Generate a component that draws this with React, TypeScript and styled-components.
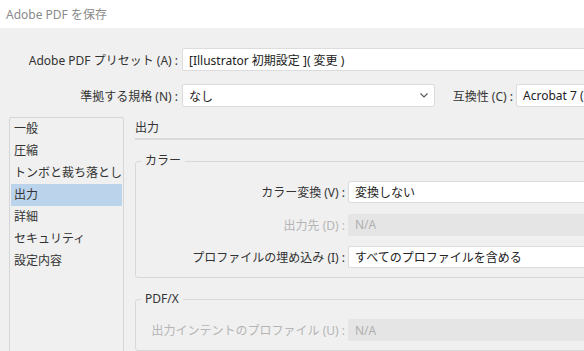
import styled, { createGlobalStyle } from 'styled-components'

const GlobalStyle = createGlobalStyle`
  html, body {
    margin: 0;
    padding: 0;
    overflow: hidden;
    background: #f0f0f0;
  }
  body {
    font-family: "Noto Sans", "Noto Sans CJK JP", sans-serif;
    font-size: 12px;
    color: #333;
  }
`

const Window = styled.div`
  width: 760px;
  height: 351px;
  background: #f0f0f0;
  overflow: hidden;
`

const TitleBar = styled.div`
  height: 28px;
  background: #fff;
  display: flex;
  align-items: center;
  padding-left: 6px;
  color: #8a8a8a;
  font-size: 12px;
`

const Header = styled.div`
  display: flex;
  flex-direction: column;
  gap: 13px;
  padding-top: 20px;
`

const HeaderRow = styled.div`
  display: flex;
  align-items: center;
  height: 23px;
`

const Label = styled.div<{ $width?: number; $disabled?: boolean }>`
  flex: none;
  ${(p) => (p.$width ? `width: ${p.$width}px;` : '')}
  text-align: right;
  white-space: nowrap;
  color: ${(p) => (p.$disabled ? '#b5b5b5' : '#333')};
`

const Field = styled.div<{ $width?: number; $disabled?: boolean }>`
  box-sizing: border-box;
  height: 100%;
  ${(p) => (p.$width ? `width: ${p.$width}px; flex: none;` : 'flex: 1;')}
  display: flex;
  align-items: center;
  justify-content: space-between;
  padding: 0 6px 0 6px;
  background: ${(p) => (p.$disabled ? '#e5e5e5' : '#fff')};
  border: 1px solid ${(p) => (p.$disabled ? '#e5e5e5' : '#dcdcdc')};
  border-radius: 2px;
  color: ${(p) => (p.$disabled ? '#b0b0b0' : '#222')};
  white-space: nowrap;
`

const Chevron = () => (
  <svg width="8" height="5" viewBox="0 0 8 5">
    <polyline points="0.5,0.5 4,4 7.5,0.5" fill="none" stroke="#555" strokeWidth="1.1" />
  </svg>
)

const Main = styled.div`
  display: flex;
  gap: 11px;
  padding-left: 9px;
  margin-top: 10px;
`

const Sidebar = styled.div`
  flex: none;
  box-sizing: border-box;
  width: 115px;
  height: 260px;
  border: 1px solid #d6d6d6;
  border-radius: 2px;
  padding: 0 1px;
`

const NavItem = styled.div<{ $active?: boolean }>`
  height: 22px;
  line-height: 22px;
  padding-left: 3px;
  white-space: nowrap;
  background: ${(p) => (p.$active ? '#bcd3ec' : 'transparent')};
  color: #333;
`

const Panel = styled.div`
  flex: 1;
  display: flex;
  flex-direction: column;
`

const PanelTitle = styled.div`
  height: 21px;
  line-height: 21px;
  border-bottom: 2px solid #dadada;
`

const Group = styled.fieldset`
  margin: 12px 0 0 0;
  padding: 0 0 9px 5px;
  border: 1px solid #d8d8d8;
  border-radius: 3px;
  display: flex;
  flex-direction: column;
  gap: 10.5px;
`

const Legend = styled.legend`
  padding: 0 4px;
  line-height: 18px;
  color: #333;
  margin-bottom: 11px;
`

const GroupRow = styled.div`
  display: grid;
  grid-template-columns: 204px 1fr;
  column-gap: 3px;
  height: 22px;
  align-items: center;
`

const navItems = ['一般', '圧縮', 'トンボと裁ち落とし', '出力', '詳細', 'セキュリティ', '設定内容']

export default function App() {
  return (
    <>
      <GlobalStyle />
      <Window>
        <TitleBar>Adobe PDF を保存</TitleBar>
        <Header>
          <HeaderRow>
            <Label $width={178}>Adobe PDF プリセット (A) :</Label>
            <div style={{ width: 4 }} />
            <Field>[Illustrator 初期設定 ]( 変更 )</Field>
          </HeaderRow>
          <HeaderRow>
            <Label $width={178}>準拠する規格 (N) :</Label>
            <div style={{ width: 4 }} />
            <Field $width={253}>
              なし
              <Chevron />
            </Field>
            <div style={{ width: 10 }} />
            <Label $width={68}>互換性 (C) :</Label>
            <div style={{ width: 3 }} />
            <Field>Acrobat 7 (PDF 1.6)</Field>
          </HeaderRow>
        </Header>
        <Main>
          <Sidebar>
            {navItems.map((item) => (
              <NavItem key={item} $active={item === '出力'}>
                {item}
              </NavItem>
            ))}
          </Sidebar>
          <Panel>
            <PanelTitle>出力</PanelTitle>
            <Group>
              <Legend>カラー</Legend>
              <GroupRow>
                <Label>カラー変換 (V) :</Label>
                <Field>変換しない</Field>
              </GroupRow>
              <GroupRow>
                <Label $disabled>出力先 (D) :</Label>
                <Field $disabled>N/A</Field>
              </GroupRow>
              <GroupRow>
                <Label>プロファイルの埋め込み (I) :</Label>
                <Field>すべてのプロファイルを含める</Field>
              </GroupRow>
            </Group>
            <Group>
              <Legend>PDF/X</Legend>
              <GroupRow>
                <Label $disabled>出力インテントのプロファイル (U) :</Label>
                <Field $disabled>N/A</Field>
              </GroupRow>
            </Group>
          </Panel>
        </Main>
      </Window>
    </>
  )
}
